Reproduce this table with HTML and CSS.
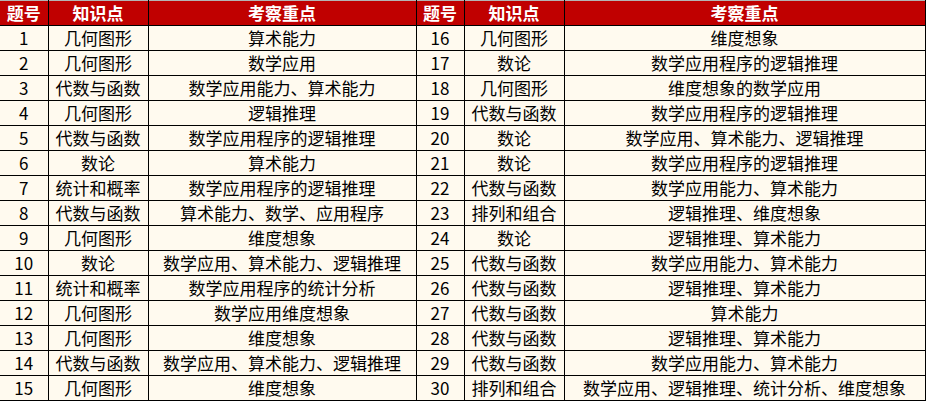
FILE: index.html
```html
<!DOCTYPE html>
<html lang="zh">
<head>
<meta charset="utf-8">
<link rel="stylesheet" href="styles.css">
</head>
<body>
<table class="grid">
<colgroup>
<col class="c-no"><col class="c-topic"><col class="c-focus-a"><col class="c-no"><col class="c-topic"><col class="c-focus-b">
</colgroup>
<thead>
<tr><th>题号</th><th>知识点</th><th>考察重点</th><th>题号</th><th>知识点</th><th>考察重点</th></tr>
</thead>
<tbody>
<tr><td>1</td><td>几何图形</td><td>算术能力</td><td>16</td><td>几何图形</td><td>维度想象</td></tr>
<tr><td>2</td><td>几何图形</td><td>数学应用</td><td>17</td><td>数论</td><td>数学应用程序的逻辑推理</td></tr>
<tr><td>3</td><td>代数与函数</td><td>数学应用能力、算术能力</td><td>18</td><td>几何图形</td><td>维度想象的数学应用</td></tr>
<tr><td>4</td><td>几何图形</td><td>逻辑推理</td><td>19</td><td>代数与函数</td><td>数学应用程序的逻辑推理</td></tr>
<tr><td>5</td><td>代数与函数</td><td>数学应用程序的逻辑推理</td><td>20</td><td>数论</td><td>数学应用、算术能力、逻辑推理</td></tr>
<tr><td>6</td><td>数论</td><td>算术能力</td><td>21</td><td>数论</td><td>数学应用程序的逻辑推理</td></tr>
<tr><td>7</td><td>统计和概率</td><td>数学应用程序的逻辑推理</td><td>22</td><td>代数与函数</td><td>数学应用能力、算术能力</td></tr>
<tr><td>8</td><td>代数与函数</td><td>算术能力、数学、应用程序</td><td>23</td><td>排列和组合</td><td>逻辑推理、维度想象</td></tr>
<tr><td>9</td><td>几何图形</td><td>维度想象</td><td>24</td><td>数论</td><td>逻辑推理、算术能力</td></tr>
<tr><td>10</td><td>数论</td><td>数学应用、算术能力、逻辑推理</td><td>25</td><td>代数与函数</td><td>数学应用能力、算术能力</td></tr>
<tr><td>11</td><td>统计和概率</td><td>数学应用程序的统计分析</td><td>26</td><td>代数与函数</td><td>逻辑推理、算术能力</td></tr>
<tr><td>12</td><td>几何图形</td><td>数学应用维度想象</td><td>27</td><td>代数与函数</td><td>算术能力</td></tr>
<tr><td>13</td><td>几何图形</td><td>维度想象</td><td>28</td><td>代数与函数</td><td>逻辑推理、算术能力</td></tr>
<tr><td>14</td><td>代数与函数</td><td>数学应用、算术能力、逻辑推理</td><td>29</td><td>代数与函数</td><td>数学应用能力、算术能力</td></tr>
<tr><td>15</td><td>几何图形</td><td>维度想象</td><td>30</td><td>排列和组合</td><td>数学应用、逻辑推理、统计分析、维度想象</td></tr>
</tbody>
</table>
</body>
</html>
```

FILE: styles.css
```css
html, body {
  margin: 0;
  padding: 0;
  background: #ffffff;
}

.grid {
  border-collapse: collapse;
  table-layout: fixed;
  width: 925px;
  border-top: 1px solid #b4b4b4;
  font-family: "Noto Sans CJK SC", "Microsoft YaHei", sans-serif;
  font-size: 17px;
  color: #000;
}

.c-no { width: 48px; }
.c-topic { width: 100px; }
.c-focus-a { width: 268px; }
.c-focus-b { width: 361px; }

.grid th,
.grid td {
  height: 24px;
  padding: 0;
  border: 1px solid #000;
  text-align: center;
  vertical-align: middle;
  line-height: 24px;
  white-space: nowrap;
  overflow: hidden;
}

.grid th {
  background: #c00000;
  color: #ffffff;
  font-weight: 700;
  border-top: 1px solid #b4b4b4;
}

.grid td {
  background: #fffaef;
}

.grid tr > :first-child {
  border-left: none;
}
```
